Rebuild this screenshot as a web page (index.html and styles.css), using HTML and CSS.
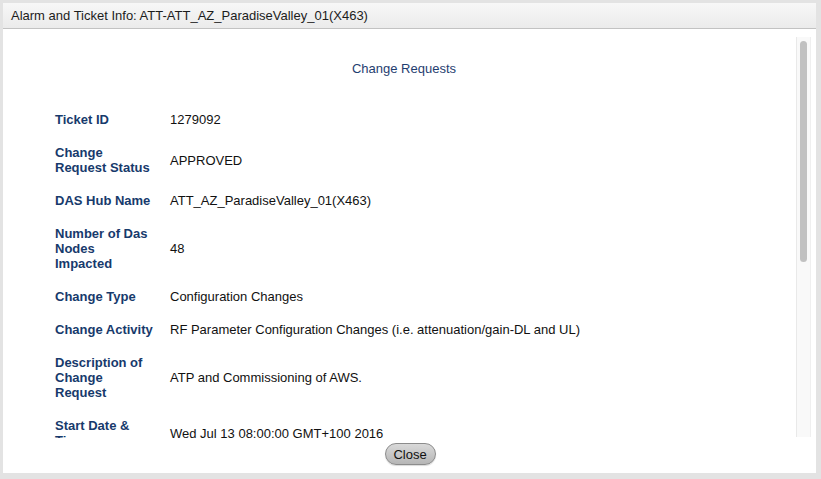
FILE: index.html
```html
<!DOCTYPE html>
<html>
<head>
<meta charset="utf-8">
<title>Alarm and Ticket Info</title>
<link rel="stylesheet" href="styles.css">
</head>
<body>
<div class="dialog">
  <div class="dialog-header">Alarm and Ticket Info: ATT-ATT_AZ_ParadiseValley_01(X463)</div>
  <div class="dialog-body">
    <div class="scroller">
      <div class="content">
        <div class="section-title">Change Requests</div>
        <div class="details">
          <div class="label">Ticket ID</div>
          <div class="value">1279092</div>
          <div class="label">Change Request Status</div>
          <div class="value">APPROVED</div>
          <div class="label">DAS Hub Name</div>
          <div class="value">ATT_AZ_ParadiseValley_01(X463)</div>
          <div class="label">Number of Das Nodes Impacted</div>
          <div class="value">48</div>
          <div class="label">Change Type</div>
          <div class="value">Configuration Changes</div>
          <div class="label">Change Activity</div>
          <div class="value">RF Parameter Configuration Changes (i.e. attenuation/gain-DL and UL)</div>
          <div class="label">Description of Change Request</div>
          <div class="value">ATP and Commissioning of AWS.</div>
          <div class="label">Start Date &amp; Time</div>
          <div class="value">Wed Jul 13 08:00:00 GMT+100 2016</div>
        </div>
      </div>
    </div>
    <div class="scrollbar"><div class="scrollbar-thumb"></div></div>
  </div>
  <div class="dialog-footer">
    <button class="close-btn" type="button">Close</button>
  </div>
</div>
</body>
</html>
```
FILE: styles.css
```css
html, body {
  margin: 0;
  padding: 0;
}
body {
  background: #e3e3e3;
  font-family: "Liberation Sans", Arial, Helvetica, sans-serif;
  width: 821px;
  height: 479px;
  overflow: hidden;
}
.dialog {
  margin: 3px 5px 0 3px;
  width: 813px;
  height: 470px;
  background: #ffffff;
  display: flex;
  flex-direction: column;
}
.dialog-header {
  height: 25px;
  line-height: 26px;
  padding-left: 8px;
  font-size: 13px;
  color: #1c1c1c;
  background: linear-gradient(#f7f7f7, #ebebeb);
  border-bottom: 1px solid #c2c2c2;
  flex: none;
}
.dialog-body {
  flex: none;
  display: flex;
  padding-top: 8px;
  padding-right: 5px;
  height: 401px;
}
.scroller {
  flex: 1;
  height: 401px;
  overflow: hidden;
}
.scrollbar {
  width: 13px;
  height: 400px;
  background: #f9f9f9;
  border-left: 1px solid #e9e9e9;
  border-right: 1px solid #efefef;
}
.scrollbar-thumb {
  margin: 4px 3px 0 3px;
  height: 221px;
  background: #c1c1c1;
  border-radius: 4px;
}
.content {
  padding-top: 24px;
}
.section-title {
  text-align: center;
  font-size: 13px;
  line-height: 15px;
  color: #1f3e70;
  padding-left: 9px;
}
.details {
  margin: 36px 0 0 52px;
  display: grid;
  grid-template-columns: 100px 1fr;
  column-gap: 15px;
  row-gap: 18px;
  align-items: center;
  font-size: 13px;
  line-height: 15px;
}
.label {
  font-weight: bold;
  color: #173a6c;
}
.value {
  color: #111111;
}
.dialog-footer {
  flex: 1;
  display: flex;
  justify-content: center;
  align-items: flex-start;
  padding-top: 5px;
  padding-left: 1px;
}
.close-btn {
  width: 51px;
  height: 22px;
  padding: 0;
  border: 1px solid #8c8c8c;
  border-radius: 11px;
  background: linear-gradient(#d9d9d9, #b6b6b6);
  font-family: "Liberation Sans", Arial, Helvetica, sans-serif;
  font-size: 13px;
  color: #111111;
  box-shadow: 0 1px 1px rgba(0,0,0,0.15);
}
```
